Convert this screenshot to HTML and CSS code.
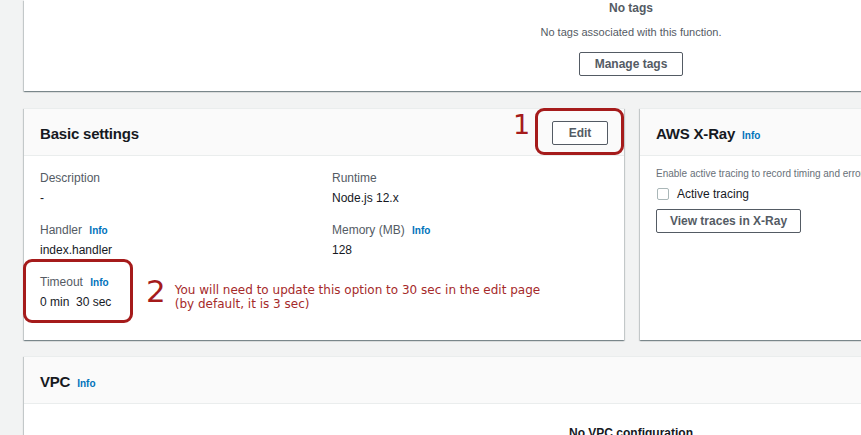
FILE: index.html
```html
<!DOCTYPE html>
<html>
<head>
<meta charset="utf-8">
<link rel="stylesheet" href="styles.css">
</head>
<body>
<div class="page">
  <section class="card tags-card">
    <div class="empty">
      <div class="empty-title">No tags</div>
      <div class="empty-text">No tags associated with this function.</div>
      <button class="btn">Manage tags</button>
    </div>
  </section>

  <div class="row">
    <section class="card basic-card">
      <header class="card-head">
        <h2>Basic settings</h2>
        <div class="edit-wrap">
          <span class="mark mark-1">1</span>
          <span class="ring ring-edit"></span>
          <button class="btn btn-edit">Edit</button>
        </div>
      </header>
      <div class="card-body grid">
        <div class="field">
          <div class="label">Description</div>
          <div class="value">-</div>
        </div>
        <div class="field">
          <div class="label">Runtime</div>
          <div class="value">Node.js 12.x</div>
        </div>
        <div class="field">
          <div class="label">Handler <a class="info">Info</a></div>
          <div class="value">index.handler</div>
        </div>
        <div class="field">
          <div class="label">Memory (MB) <a class="info">Info</a></div>
          <div class="value">128</div>
        </div>
        <div class="field timeout">
          <span class="ring ring-timeout"></span>
          <div class="label">Timeout <a class="info">Info</a></div>
          <div class="value">0 min&nbsp;&nbsp;30 sec</div>
          <div class="note">
            <span class="mark mark-2">2</span>
            <span class="note-text">You will need to update this option to 30 sec in the edit page<br>(by default, it is 3 sec)</span>
          </div>
        </div>
      </div>
    </section>

    <section class="card xray-card">
      <header class="card-head">
        <h2>AWS X-Ray <a class="info">Info</a></h2>
      </header>
      <div class="card-body xray-body">
        <div class="hint">Enable active tracing to record timing and error information</div>
        <label class="check"><span class="box"></span>Active tracing</label>
        <button class="btn btn-wide">View traces in X-Ray</button>
      </div>
    </section>
  </div>

  <section class="card vpc-card">
    <header class="card-head">
      <h2>VPC <a class="info">Info</a></h2>
    </header>
    <div class="card-body vpc-body">
      <div class="empty-title">No VPC configuration</div>
    </div>
  </section>
</div>
</body>
</html>
```

FILE: styles.css
```css
html, body {
  margin: 0;
  padding: 0;
  background: #f2f3f3;
  overflow: hidden;
  width: 861px;
  height: 435px;
}
body {
  font-family: "Liberation Sans", Arial, sans-serif;
  color: #16191f;
  font-size: 12px;
}
.page {
  padding-left: 24px;
  width: 1400px;
}
.card {
  background: #fff;
  box-shadow: 0 1px 1px 0 rgba(0, 28, 36, 0.3), 1px 1px 1px 0 rgba(0, 28, 36, 0.15), -1px 1px 1px 0 rgba(0, 28, 36, 0.15);
  border-top: 1px solid #eaeded;
}
.tags-card {
  width: 1214px;
  height: 91px;
  border-top: none;
}
.empty {
  display: flex;
  flex-direction: column;
  align-items: center;
  padding-top: 1px;
}
.empty-title {
  font-weight: bold;
  font-size: 12px;
  color: #545b64;
  line-height: 15px;
}
.empty-text {
  margin-top: 9px;
  font-size: 11px;
  color: #545b64;
  line-height: 15px;
}
.btn {
  font-family: inherit;
  font-weight: bold;
  font-size: 12px;
  color: #545b64;
  background: #fff;
  border: 1px solid #545b64;
  border-radius: 2px;
  height: 24px;
  padding: 0 16px;
  cursor: pointer;
  white-space: nowrap;
}
.empty .btn {
  margin-top: 12px;
  width: 104px;
  padding: 0;
}
.row {
  display: flex;
  gap: 16px;
  margin-top: 17px;
}
.basic-card {
  width: 600px;
  height: 231px;
}
.xray-card {
  width: 400px;
  height: 231px;
}
.card-head {
  height: 46px;
  background: #fafafa;
  border-bottom: 1px solid #eaeded;
  display: flex;
  align-items: center;
  justify-content: space-between;
  padding: 0 16px;
}
.card-head h2 {
  margin: 0;
  padding-top: 2px;
  font-size: 15px;
  font-weight: bold;
  color: #16191f;
  letter-spacing: -0.2px;
}
.info {
  font-size: 10px;
  font-weight: bold;
  color: #0073bb;
  margin-left: 4px;
  letter-spacing: 0;
}
.card-head h2 .info {
  margin-left: 3px;
}
.edit-wrap {
  position: relative;
  display: flex;
  align-items: center;
}
.btn-edit {
  width: 56px;
  padding: 0;
  position: relative;
  z-index: 1;
  margin-top: 1px;
}
.ring {
  position: absolute;
  border: 3px solid #a51b1b;
  border-radius: 9px;
  box-sizing: border-box;
}
.ring-edit {
  left: -17px;
  top: -12px;
  width: 89px;
  height: 47px;
}
.mark {
  color: #a51b1b;
  font-family: "DejaVu Sans", sans-serif;
  font-weight: normal;
}
.mark-1 {
  position: absolute;
  left: -39px;
  top: -10px;
  font-size: 27px;
  line-height: 30px;
}
.card-body {
  padding: 14px 16px 12px;
}
.grid {
  display: grid;
  grid-template-columns: 292px 1fr;
  row-gap: 14px;
}
.field {
  position: relative;
}
.label {
  color: #545b64;
  font-size: 12px;
  line-height: 16px;
  height: 16px;
}
.value {
  margin-top: 2px;
  line-height: 20px;
  font-size: 12px;
  color: #16191f;
  font-weight: 500;
}
.timeout {
  grid-column: 1 / 3;
}
.ring-timeout {
  left: -17px;
  top: -15px;
  width: 110px;
  height: 64px;
}
.note {
  position: absolute;
  left: 106px;
  top: -1px;
  display: flex;
  align-items: flex-start;
  gap: 9px;
}
.mark-2 {
  font-size: 31px;
  line-height: 36px;
}
.note-text {
  margin-top: 10px;
  font-family: "DejaVu Sans", sans-serif;
  font-size: 12px;
  line-height: 14px;
  color: #a52a2a;
  white-space: nowrap;
}
.xray-body {
  padding-top: 11px;
}
.hint {
  font-size: 10px;
  color: #687078;
  line-height: 14px;
  white-space: nowrap;
}
.check {
  display: flex;
  align-items: center;
  margin-top: 5px;
  font-size: 12px;
  line-height: 16px;
  gap: 8px;
}
.box {
  width: 10px;
  height: 10px;
  border: 1px solid #aab7b8;
  border-radius: 2px;
  margin-left: 1px;
}
.btn-wide {
  margin-top: 7px;
  width: 145px;
  padding: 0;
}
.vpc-card {
  width: 1214px;
  margin-top: 16px;
  height: 120px;
}
.vpc-body {
  display: flex;
  justify-content: center;
  padding-top: 22px;
}
.vpc-body .empty-title {
  color: #16191f;
}
```
